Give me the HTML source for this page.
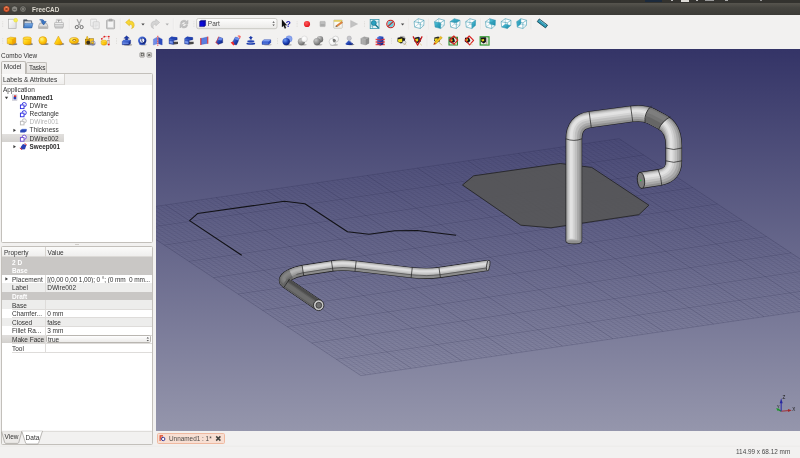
<!DOCTYPE html>
<html><head><meta charset="utf-8"><title>FreeCAD</title>
<style>
html,body{margin:0;padding:0;}
body{width:800px;height:458px;overflow:hidden;background:#f2f1f0;position:relative;font-family:"Liberation Sans",sans-serif;font-size:6.4px;color:#333333;}
.a{position:absolute;white-space:nowrap;line-height:8px;}
.b{font-weight:bold;}
svg{position:absolute;left:0;top:0;overflow:visible;}
#w{position:absolute;left:0;top:0;width:800px;height:458px;will-change:transform;}
</style></head><body><div id="w">

<div class="a" style="left:0;top:0;width:800px;height:3px;background:#33322e;"></div>
<div class="a" style="left:0;top:2.5px;width:800px;height:12px;background:linear-gradient(#57554e,#45443f 40%,#3c3b37);"></div>
<div class="a" style="left:645px;top:0;width:17px;height:1.6px;background:#1c2a3c;"></div>
<div class="a" style="left:681px;top:0;width:8px;height:2px;background:#dddbd6;"></div>
<div class="a" style="left:671px;top:0;width:2px;height:1.2px;background:#bbb;"></div>
<div class="a" style="left:696px;top:0;width:2px;height:1.2px;background:#bbb;"></div>
<div class="a" style="left:705px;top:0;width:9px;height:1px;background:#999;"></div>
<div class="a" style="left:725px;top:0;width:3px;height:1.4px;background:#aaa;"></div>
<div class="a" style="left:760px;top:0;width:2px;height:1px;background:#999;"></div>
<svg width="800" height="16">
 <defs><radialGradient id="cb" cx="0.5" cy="0.35" r="0.7"><stop offset="0" stop-color="#f58a5a"/><stop offset="1" stop-color="#d9481f"/></radialGradient></defs>
 <circle cx="6.5" cy="9" r="3.3" fill="url(#cb)" stroke="#3a2a22" stroke-width="0.6"/>
 <path d="M5.3 7.8L7.7 10.2M7.7 7.8L5.3 10.2" stroke="#5a1e0c" stroke-width="0.8"/>
 <circle cx="14.6" cy="9" r="3.1" fill="#8a8983" stroke="#33322e" stroke-width="0.6"/>
 <path d="M13.2 9.3H16" stroke="#45443f" stroke-width="0.8"/>
 <circle cx="23" cy="9" r="3.1" fill="#8a8983" stroke="#33322e" stroke-width="0.6"/>
 <rect x="21.7" y="7.8" width="2.6" height="2.4" fill="none" stroke="#45443f" stroke-width="0.7"/>
</svg>
<div class="a b" style="left:31.6px;top:5.6px;font-size:7.5px;color:#dfdbd2;transform-origin:0 0;transform:scaleX(0.85);">FreeCAD</div>
<div class="a" style="left:0;top:14.5px;width:800px;height:35px;background:#f2f1f0;"></div><svg width="800" height="50"><defs>
<linearGradient id="gy" x1="0" y1="0" x2="1" y2="1"><stop offset="0" stop-color="#fff05a"/><stop offset="0.55" stop-color="#ffc808"/><stop offset="1" stop-color="#ea9a00"/></linearGradient>
<radialGradient id="gys" cx="0.38" cy="0.32" r="0.75"><stop offset="0" stop-color="#fff68a"/><stop offset="0.5" stop-color="#ffcc10"/><stop offset="1" stop-color="#ea9a00"/></radialGradient>
<linearGradient id="gb" x1="0" y1="0" x2="1" y2="1"><stop offset="0" stop-color="#5f86e8"/><stop offset="0.6" stop-color="#1c3aa8"/><stop offset="1" stop-color="#0c1e70"/></linearGradient>
<radialGradient id="gbs" cx="0.35" cy="0.3" r="0.8"><stop offset="0" stop-color="#6f9cf5"/><stop offset="0.55" stop-color="#1c3fb4"/><stop offset="1" stop-color="#0a1a66"/></radialGradient>
<radialGradient id="ggs" cx="0.35" cy="0.3" r="0.8"><stop offset="0" stop-color="#c9c9c9"/><stop offset="0.6" stop-color="#8c8c8c"/><stop offset="1" stop-color="#5c5c5c"/></radialGradient>
<radialGradient id="gws" cx="0.4" cy="0.35" r="0.8"><stop offset="0" stop-color="#ffffff"/><stop offset="0.7" stop-color="#f1f1f1"/><stop offset="1" stop-color="#bcbcbc"/></radialGradient>
<linearGradient id="gt" x1="0" y1="0" x2="1" y2="1"><stop offset="0" stop-color="#58c4dc"/><stop offset="1" stop-color="#1489a8"/></linearGradient>
<radialGradient id="gr" cx="0.4" cy="0.35" r="0.7"><stop offset="0" stop-color="#ff5a5a"/><stop offset="1" stop-color="#e01018"/></radialGradient>
<linearGradient id="gpg" x1="0" y1="0" x2="1" y2="1"><stop offset="0" stop-color="#ffffff"/><stop offset="1" stop-color="#dcdcdc"/></linearGradient>
<linearGradient id="gf" x1="0" y1="0" x2="0" y2="1"><stop offset="0" stop-color="#7eaee6"/><stop offset="1" stop-color="#3d78c4"/></linearGradient>
</defs><rect x="2.2" y="21.4" width="1" height="0.8" fill="#dddbd8"/><rect x="2.2" y="23" width="1" height="0.8" fill="#dddbd8"/><rect x="2.2" y="24.6" width="1" height="0.8" fill="#dddbd8"/><rect x="2.2" y="26.2" width="1" height="0.8" fill="#dddbd8"/><rect x="2.2" y="38.2" width="1" height="0.8" fill="#dddbd8"/><rect x="2.2" y="39.8" width="1" height="0.8" fill="#dddbd8"/><rect x="2.2" y="41.4" width="1" height="0.8" fill="#dddbd8"/><rect x="2.2" y="43" width="1" height="0.8" fill="#dddbd8"/><g transform="translate(12.5 24)"><rect x="-4.2" y="-4.8" width="7.8" height="9.4" fill="url(#gpg)" stroke="#a9a9a9" stroke-width="0.6"/><circle cx="3.2" cy="-3.8" r="1.9" fill="#f6ee5a" stroke="#e6d820" stroke-width="0.4"/></g><g transform="translate(28 24)"><path d="M-4.4 -4.2L-1 -4.2L0 -3.2L3.6 -3.2L3.6 3.6L-4.4 3.6Z" fill="#54606e" stroke="#39434f" stroke-width="0.5"/><path d="M-3.4 -2.6H3.2V1H-3.4Z" fill="#e8e8e8"/><path d="M-3.2 -0.8L5 -0.8L3.8 3.9L-4.4 3.9Z" fill="url(#gf)" stroke="#3465a4" stroke-width="0.5"/></g><g transform="translate(43.2 24)"><path d="M-3.4 -0.8L3.4 -0.8L4.6 2L4.6 4.4L-4.6 4.4L-4.6 2Z" fill="#dedede" stroke="#8e8e8e" stroke-width="0.6"/><path d="M-4.2 2.4H4.2V4H-4.2Z" fill="#b4b4b4"/><path d="M-3.6 -4.2Q0.2 -5.4 1.4 -2.6L3 -2.6L0.4 1L-2.2 -2.6L-0.8 -2.6Q-1.4 -3.8 -3.6 -4.2Z" fill="#3a76c4" stroke="#1f4f94" stroke-width="0.5"/></g><g transform="translate(59 24)"><path d="M-2.6 -4.6H2.6V-1H-2.6Z" fill="#f8f8f8" stroke="#a4a4a4" stroke-width="0.5"/><path d="M-1.6 -3.6H1.6M-0.4 -3.6V-1.8" stroke="#7a7a7a" stroke-width="0.6"/><path d="M-4.4 -1Q-4.4 -1.6 -3.8 -1.6L3.8 -1.6Q4.4 -1.6 4.4 -1L4.4 3L-4.4 3Z" fill="#ececec" stroke="#9a9a9a" stroke-width="0.5"/><path d="M-4.4 0.8H4.4" stroke="#9a9a9a" stroke-width="0.7"/><path d="M-3.8 3H3.8V4.2H-3.8Z" fill="#d2d2d2" stroke="#9a9a9a" stroke-width="0.4"/></g><g transform="translate(79.2 24)"><path d="M-2.2 -4.8L1 1.6M2.2 -4.8L-1 1.6" stroke="#a8a8a8" stroke-width="1.2"/><circle cx="-2.4" cy="3.1" r="1.6" fill="none" stroke="#6e6e6e" stroke-width="1"/><circle cx="2.4" cy="3.1" r="1.6" fill="none" stroke="#6e6e6e" stroke-width="1"/></g><g transform="translate(95 24)"><rect x="-4.4" y="-4.8" width="6" height="7" rx="0.6" fill="#f0f0f0" stroke="#c4c4c4" stroke-width="0.6"/><rect x="-1.8" y="-2.2" width="6" height="7" rx="0.6" fill="#ededed" stroke="#bdbdbd" stroke-width="0.6"/><path d="M-0.4 0H2.8M-0.4 1.4H2.8M-0.4 2.8H1.6" stroke="#cfcfcf" stroke-width="0.5"/></g><g transform="translate(110.6 24)"><rect x="-4" y="-4" width="8" height="8.8" rx="0.7" fill="#dadada" stroke="#8e8e8e" stroke-width="0.6"/><rect x="-2.9" y="-2.8" width="5.8" height="6.6" fill="#f4f4f4" stroke="#bcbcbc" stroke-width="0.4"/><rect x="-1.6" y="-5" width="3.2" height="1.9" rx="0.5" fill="#b4b4b4" stroke="#8a8a8a" stroke-width="0.4"/></g><g transform="translate(130.2 24)"><path d="M-4.6 -1.6L-0.8 -4.8L-0.8 -3Q4 -3 4 1.4Q4 3.8 1.4 4.6Q2.6 3.2 1.8 1.6Q1 0 -0.8 0L-0.8 1.8Z" fill="#f7d736" stroke="#d8a800" stroke-width="0.5" stroke-linejoin="round"/></g><g transform="translate(155 24)"><g transform="scale(-1 1)"><path d="M-4.6 -1.6L-0.8 -4.8L-0.8 -3Q4 -3 4 1.4Q4 3.8 1.4 4.6Q2.6 3.2 1.8 1.6Q1 0 -0.8 0L-0.8 1.8Z" fill="#d4d4d4" stroke="#b4b4b4" stroke-width="0.5" stroke-linejoin="round"/></g></g><g transform="translate(184 24)"><path d="M-3.6 -0.6Q-3.2 -3.8 0 -3.8Q1.8 -3.8 2.8 -2.6L4 -3.8L4 -0.2L0.4 -0.2L1.6 -1.4Q0.9 -2.1 0 -2.1Q-1.8 -2.1 -2 -0.6Z" fill="#c2c2c2" stroke="#a6a6a6" stroke-width="0.4"/><path d="M3.6 0.8Q3.2 4 0 4Q-1.8 4 -2.8 2.8L-4 4L-4 0.4L-0.4 0.4L-1.6 1.6Q-0.9 2.3 0 2.3Q1.8 2.3 2 0.8Z" fill="#c2c2c2" stroke="#a6a6a6" stroke-width="0.4"/></g><g transform="translate(286 24)"><path d="M-4 -4.2L-4 3L-2.4 1.6L-1.2 4.4L0 3.9L-1.2 1.2L0.8 1.2Z" fill="#111" stroke="#000" stroke-width="0.3"/><text x="-0.2" y="3.2" font-size="8.4" font-weight="bold" fill="#2424a8" font-family="Liberation Sans, sans-serif">?</text></g><g transform="translate(307 24)"><circle cx="0" cy="0" r="3.1" fill="url(#gr)"/></g><g transform="translate(322.6 24)"><rect x="-2.6" y="-2.6" width="5.2" height="5.2" rx="0.5" fill="#bdbdbd" stroke="#a4a4a4" stroke-width="0.5"/><rect x="-2.1" y="0" width="4.2" height="2.1" fill="#aaaaaa"/></g><g transform="translate(338 24)"><rect x="-4.2" y="-4" width="8.4" height="8.2" rx="0.6" fill="#fbfbf6" stroke="#b0ae9e" stroke-width="0.6"/><rect x="-4.2" y="-4" width="8.4" height="1.8" fill="#e2cf6a"/><path d="M-3 1.4H2M-3 2.8H2.6" stroke="#d6d4c8" stroke-width="0.5"/><path d="M-1.8 1.6L3.6 -2.4L4.6 -1.2L-0.8 2.6Z" fill="#e8873a" stroke="#b05a20" stroke-width="0.4"/><path d="M-1.8 1.6L-0.8 2.6L-2.6 3Z" fill="#4a3a2a"/></g><g transform="translate(353.6 24)"><path d="M-3 -3.6L4 0L-3 3.6Z" fill="#c2c2c2" stroke="#b0b0b0" stroke-width="0.4"/></g><g transform="translate(374.6 24)"><rect x="-4.4" y="-4.6" width="8.8" height="9.2" fill="#e6f3f6" stroke="#3a98ae" stroke-width="0.8"/><path d="M-4.4 2L-2 2L-2 4.6M4.4 -2L2.6 -2" stroke="#3a98ae" stroke-width="0.6" fill="none"/><circle cx="-0.8" cy="-1" r="2.5" fill="#2aa0c0" stroke="#147890" stroke-width="0.7"/><path d="M1 1L3.6 3.6" stroke="#147890" stroke-width="1.4" stroke-linecap="round"/></g><g transform="translate(390.6 24)"><circle cx="0" cy="0" r="3" fill="#6accdc"/><circle cx="0" cy="0" r="3.8" fill="none" stroke="#c02020" stroke-width="1.1"/><path d="M-2.8 2.6L2.8 -2.6" stroke="#c02020" stroke-width="1.1"/></g><g transform="translate(419.2 24)"><path d="M-5.1 -2.3 L-0.9 -5.3 L4.8 -3.7 L4.6 1.4 L1.1 4.5 L-4.5 3.1 Z" fill="#ffffff" opacity="0.85"/><g fill="none" stroke="#2f93ac" stroke-width="0.55" stroke-linejoin="round"><path d="M-5.1 -2.3 L-0.9 -5.3 L4.8 -3.7 L4.6 1.4 L1.1 4.5 L-4.5 3.1 Z" fill="none" /><path d="M-5.1 -2.3L1.1 -1.2L4.8 -3.7M1.1 -1.2L1.1 4.5"/><path d="M-4.5 3.1L-0.9 0.1L4.6 1.4M-0.9 0.1L-0.9 -5.3" opacity="0.6"/></g></g><g transform="translate(439.6 24)"><path d="M-5.1 -2.3 L-0.9 -5.3 L4.8 -3.7 L4.6 1.4 L1.1 4.5 L-4.5 3.1 Z" fill="#ffffff" opacity="0.85"/><path d="M-5.1 -2.3 L1.1 -1.2 L1.1 4.5 L-4.5 3.1 Z" fill="url(#gt)" /><g fill="none" stroke="#2f93ac" stroke-width="0.55" stroke-linejoin="round"><path d="M-5.1 -2.3 L-0.9 -5.3 L4.8 -3.7 L4.6 1.4 L1.1 4.5 L-4.5 3.1 Z" fill="none" /><path d="M-5.1 -2.3L1.1 -1.2L4.8 -3.7M1.1 -1.2L1.1 4.5"/><path d="M-4.5 3.1L-0.9 0.1L4.6 1.4M-0.9 0.1L-0.9 -5.3" opacity="0.6"/></g></g><g transform="translate(455.2 24)"><path d="M-5.1 -2.3 L-0.9 -5.3 L4.8 -3.7 L4.6 1.4 L1.1 4.5 L-4.5 3.1 Z" fill="#ffffff" opacity="0.85"/><path d="M-5.1 -2.3 L-0.9 -5.3 L4.8 -3.7 L1.1 -1.2 Z" fill="url(#gt)" /><g fill="none" stroke="#2f93ac" stroke-width="0.55" stroke-linejoin="round"><path d="M-5.1 -2.3 L-0.9 -5.3 L4.8 -3.7 L4.6 1.4 L1.1 4.5 L-4.5 3.1 Z" fill="none" /><path d="M-5.1 -2.3L1.1 -1.2L4.8 -3.7M1.1 -1.2L1.1 4.5"/><path d="M-4.5 3.1L-0.9 0.1L4.6 1.4M-0.9 0.1L-0.9 -5.3" opacity="0.6"/></g></g><g transform="translate(470.8 24)"><path d="M-5.1 -2.3 L-0.9 -5.3 L4.8 -3.7 L4.6 1.4 L1.1 4.5 L-4.5 3.1 Z" fill="#ffffff" opacity="0.85"/><path d="M1.1 -1.2 L4.8 -3.7 L4.6 1.4 L1.1 4.5 Z" fill="url(#gt)" /><g fill="none" stroke="#2f93ac" stroke-width="0.55" stroke-linejoin="round"><path d="M-5.1 -2.3 L-0.9 -5.3 L4.8 -3.7 L4.6 1.4 L1.1 4.5 L-4.5 3.1 Z" fill="none" /><path d="M-5.1 -2.3L1.1 -1.2L4.8 -3.7M1.1 -1.2L1.1 4.5"/><path d="M-4.5 3.1L-0.9 0.1L4.6 1.4M-0.9 0.1L-0.9 -5.3" opacity="0.6"/></g></g><g transform="translate(490.6 24)"><path d="M-5.1 -2.3 L-0.9 -5.3 L4.8 -3.7 L4.6 1.4 L1.1 4.5 L-4.5 3.1 Z" fill="#ffffff" opacity="0.85"/><path d="M-0.9 -5.3 L4.8 -3.7 L4.6 1.4 L-0.9 0.1 Z" fill="url(#gt)" /><g fill="none" stroke="#2f93ac" stroke-width="0.55" stroke-linejoin="round"><path d="M-5.1 -2.3 L-0.9 -5.3 L4.8 -3.7 L4.6 1.4 L1.1 4.5 L-4.5 3.1 Z" fill="none" /><path d="M-5.1 -2.3L1.1 -1.2L4.8 -3.7M1.1 -1.2L1.1 4.5"/><path d="M-4.5 3.1L-0.9 0.1L4.6 1.4M-0.9 0.1L-0.9 -5.3" opacity="0.6"/></g></g><g transform="translate(506.2 24)"><path d="M-5.1 -2.3 L-0.9 -5.3 L4.8 -3.7 L4.6 1.4 L1.1 4.5 L-4.5 3.1 Z" fill="#ffffff" opacity="0.85"/><path d="M-4.5 3.1 L1.1 4.5 L4.6 1.4 L-0.9 0.1 Z" fill="url(#gt)" /><g fill="none" stroke="#2f93ac" stroke-width="0.55" stroke-linejoin="round"><path d="M-5.1 -2.3 L-0.9 -5.3 L4.8 -3.7 L4.6 1.4 L1.1 4.5 L-4.5 3.1 Z" fill="none" /><path d="M-5.1 -2.3L1.1 -1.2L4.8 -3.7M1.1 -1.2L1.1 4.5"/><path d="M-4.5 3.1L-0.9 0.1L4.6 1.4M-0.9 0.1L-0.9 -5.3" opacity="0.6"/></g></g><g transform="translate(521.8 24)"><path d="M-5.1 -2.3 L-0.9 -5.3 L4.8 -3.7 L4.6 1.4 L1.1 4.5 L-4.5 3.1 Z" fill="#ffffff" opacity="0.85"/><path d="M-0.9 -5.3 L-5.1 -2.3 L-4.5 3.1 L-0.9 0.1 Z" fill="url(#gt)" /><g fill="none" stroke="#2f93ac" stroke-width="0.55" stroke-linejoin="round"><path d="M-5.1 -2.3 L-0.9 -5.3 L4.8 -3.7 L4.6 1.4 L1.1 4.5 L-4.5 3.1 Z" fill="none" /><path d="M-5.1 -2.3L1.1 -1.2L4.8 -3.7M1.1 -1.2L1.1 4.5"/><path d="M-4.5 3.1L-0.9 0.1L4.6 1.4M-0.9 0.1L-0.9 -5.3" opacity="0.6"/></g></g><g transform="translate(542.4 24)"><g transform="translate(0 -0.6) rotate(37)"><rect x="-5.2" y="-1.7" width="10.4" height="3.4" fill="#2c9ab6" stroke="#123c48" stroke-width="0.7"/><path d="M-3.4 -1.6V0M-1.8 -1.6V-0.3M-0.2 -1.6V0M1.4 -1.6V-0.3M3 -1.6V0" stroke="#bfe8f2" stroke-width="0.5"/></g></g><path d="M69.4 18.5V29.5" stroke="#e1dfdc" stroke-width="0.6"/><path d="M70 18.5V29.5" stroke="#f9f9f8" stroke-width="0.5"/><path d="M120.4 18.5V29.5" stroke="#e1dfdc" stroke-width="0.6"/><path d="M121 18.5V29.5" stroke="#f9f9f8" stroke-width="0.5"/><path d="M173.4 18.5V29.5" stroke="#e1dfdc" stroke-width="0.6"/><path d="M174 18.5V29.5" stroke="#f9f9f8" stroke-width="0.5"/><path d="M409 18.5V29.5" stroke="#e1dfdc" stroke-width="0.6"/><path d="M409.6 18.5V29.5" stroke="#f9f9f8" stroke-width="0.5"/><path d="M429 18.5V29.5" stroke="#e1dfdc" stroke-width="0.6"/><path d="M429.6 18.5V29.5" stroke="#f9f9f8" stroke-width="0.5"/><path d="M480.6 18.5V29.5" stroke="#e1dfdc" stroke-width="0.6"/><path d="M481.2 18.5V29.5" stroke="#f9f9f8" stroke-width="0.5"/><path d="M531.2 18.5V29.5" stroke="#e1dfdc" stroke-width="0.6"/><path d="M531.8 18.5V29.5" stroke="#f9f9f8" stroke-width="0.5"/><rect x="193.4" y="21.4" width="1" height="0.8" fill="#dddbd8"/><rect x="193.4" y="23" width="1" height="0.8" fill="#dddbd8"/><rect x="193.4" y="24.6" width="1" height="0.8" fill="#dddbd8"/><rect x="193.4" y="26.2" width="1" height="0.8" fill="#dddbd8"/><rect x="296.6" y="21.4" width="1" height="0.8" fill="#dddbd8"/><rect x="296.6" y="23" width="1" height="0.8" fill="#dddbd8"/><rect x="296.6" y="24.6" width="1" height="0.8" fill="#dddbd8"/><rect x="296.6" y="26.2" width="1" height="0.8" fill="#dddbd8"/><rect x="364" y="21.4" width="1" height="0.8" fill="#dddbd8"/><rect x="364" y="23" width="1" height="0.8" fill="#dddbd8"/><rect x="364" y="24.6" width="1" height="0.8" fill="#dddbd8"/><rect x="364" y="26.2" width="1" height="0.8" fill="#dddbd8"/><path d="M141.3 23.4L144.7 23.4L143 25.4Z" fill="#4a4a4a"/><path d="M165.5 23.4L168.9 23.4L167.2 25.4Z" fill="#b0b0b0"/><path d="M400.9 23.4L404.3 23.4L402.6 25.4Z" fill="#4a4a4a"/><g transform="translate(11.6 40.8)"><ellipse cx="1.4" cy="3.3" rx="4.4" ry="1.2" fill="#2a2a2a" opacity="0.55"/><path d="M-4.4 -2.4L-1 -3.8L4.2 -3L4.2 2L1 3.8L-4.4 2.8Z" fill="url(#gy)" stroke="#c88400" stroke-width="0.4"/><path d="M-4.4 -2.4L1 -1.4L4.2 -3M1 -1.4L1 3.8" stroke="#e09a00" stroke-width="0.4" fill="none"/><path d="M1 -1.4L4.2 -3L4.2 2L1 3.8Z" fill="#e89400" opacity="0.55"/></g><g transform="translate(27.2 40.8)"><ellipse cx="1.6" cy="3.3" rx="4.2" ry="1.2" fill="#2a2a2a" opacity="0.55"/><path d="M-4 -2.6L-4 2.4Q-4 3.9 0 3.9Q4 3.9 4 2.4L4 -2.6Z" fill="url(#gy)" stroke="#c88400" stroke-width="0.4"/><ellipse cx="0" cy="-2.6" rx="4" ry="1.4" fill="#ffd83a" stroke="#d89a00" stroke-width="0.4"/></g><g transform="translate(42.8 40.8)"><ellipse cx="1.8" cy="3.2" rx="4" ry="1.1" fill="#2a2a2a" opacity="0.55"/><circle cx="0" cy="-0.2" r="4" fill="url(#gys)" stroke="#c88400" stroke-width="0.4"/></g><g transform="translate(58.4 40.8)"><ellipse cx="1.8" cy="3.3" rx="4" ry="1.1" fill="#2a2a2a" opacity="0.55"/><path d="M0 -4.8L-4 2.8Q-4 4 0 4Q4 4 4 2.8Z" fill="url(#gy)" stroke="#c88400" stroke-width="0.4"/></g><g transform="translate(74 40.8)"><ellipse cx="1.4" cy="3" rx="4.4" ry="1.1" fill="#2a2a2a" opacity="0.55"/><ellipse cx="0" cy="-0.2" rx="4.6" ry="3.2" fill="url(#gys)" stroke="#c88400" stroke-width="0.4"/><ellipse cx="0.2" cy="-0.6" rx="1.8" ry="1" fill="#b87400" stroke="#8a5600" stroke-width="0.3"/><ellipse cx="0.3" cy="-0.3" rx="1.2" ry="0.55" fill="#f4e6b0"/></g><g transform="translate(89.8 40.8)"><ellipse cx="1" cy="3.4" rx="4.4" ry="1.1" fill="#2a2a2a" opacity="0.55"/><path d="M-2.6 -4.8L-0.8 -1L-4.4 -1Z" fill="#f8c820" stroke="#a87800" stroke-width="0.3"/><rect x="-4.6" y="-1.2" width="4.2" height="4.6" fill="#e8a800" stroke="#7a5600" stroke-width="0.4"/><rect x="-0.6" y="-2.2" width="4.4" height="5" fill="#f8c41c" stroke="#7a5600" stroke-width="0.4"/><circle cx="-1.6" cy="1.6" r="1.9" fill="#3a3020"/><circle cx="3.2" cy="2.4" r="2.2" fill="none" stroke="#7a82c0" stroke-width="0.7"/></g><g transform="translate(105.2 40.8)"><path d="M-4 0.4L-4 3Q-4 4.4 -1.2 4.4Q1.6 4.4 1.6 3L1.6 0.4Z" fill="url(#gy)" stroke="#c88400" stroke-width="0.4"/><ellipse cx="-1.2" cy="0.4" rx="2.8" ry="1.1" fill="#ffd83a" stroke="#d89a00" stroke-width="0.3"/><rect x="2" y="-0.6" width="2.4" height="4.4" fill="#f4f4f4" stroke="#8a8a8a" stroke-width="0.4"/><path d="M-3.4 -2.2L-1 -4.2L3.6 -4.2L3.6 3.6" fill="none" stroke="#e02020" stroke-width="0.6" stroke-dasharray="1 0.8"/><circle cx="-3.4" cy="-2" r="0.9" fill="#e02020"/><circle cx="-0.8" cy="-4.2" r="0.9" fill="#e02020"/><circle cx="3.6" cy="-4.2" r="0.9" fill="#e02020"/><circle cx="3.6" cy="3.8" r="0.9" fill="#e02020"/></g><g transform="translate(126.6 40.8)"><ellipse cx="1.4" cy="4" rx="4.2" ry="0.9" fill="#2a2a2a" opacity="0.45"/><path d="M0 -5L2.8 -2.6L1.2 -2.6L1.2 -0.6L-1.2 -0.6L-1.2 -2.6L-2.8 -2.6Z" fill="#1c3aa8" stroke="#0c1e70" stroke-width="0.3"/><path d="M-4.4 0.6L-2.8 -0.8L4 -0.8L4 2.6L2.4 4L-4.4 4Z" fill="url(#gb)" stroke="#0c1e70" stroke-width="0.3"/><path d="M-4.4 0.6L-2.8 -0.8L4 -0.8L2.4 0.6Z" fill="#4a6ed4"/><path d="M-4 1.6H2V3.2H-4Z" fill="#7a9af0" opacity="0.75"/></g><g transform="translate(142.2 40.8)"><ellipse cx="1.2" cy="4" rx="3.4" ry="0.8" fill="#2a2a2a" opacity="0.3"/><circle cx="0" cy="-0.2" r="3.2" fill="#f4f6fc" stroke="url(#gb)" stroke-width="2"/><path d="M-0.4 -3V0.6L1.6 2" stroke="#1c2a6a" stroke-width="0.8" fill="none"/><path d="M-3.6 2.2Q0 5.4 3.6 2.2L2.4 4.2L-2.4 4.2Z" fill="#3a5ec8"/></g><g transform="translate(157.8 40.8)"><path d="M-4.4 -1.6L-0.6 -3.6L-0.6 3L-4.4 4.2Z" fill="#6f8ce8" stroke="#3a56c0" stroke-width="0.3"/><path d="M4.4 -1.6L0.6 -3.6L0.6 3L4.4 4.2Z" fill="#2c4cc0" stroke="#1c3aa8" stroke-width="0.3"/><path d="M0 -5V5" stroke="#f02a2a" stroke-width="0.9" stroke-dasharray="1.7 0.6"/></g><g transform="translate(173.2 40.8)"><path d="M-0.6 1L4.8 1L4.8 3.2L0.6 3.8Z" fill="#1c1c1c" opacity="0.8"/><path d="M-4.2 -2.2L-1.6 -4L4 -3.2L4 -1L0.4 -0.4L0.4 3.8L-4.2 3Z" fill="url(#gb)" stroke="#0c1e70" stroke-width="0.3"/><path d="M-4.2 -2.2L-1.6 -4L4 -3.2L1.2 -1.6Z" fill="#2444b4"/><path d="M-3.6 0.2L-0.4 0.6L-0.4 3L-3.6 2.4Z" fill="#8aa8f4" opacity="0.85"/></g><g transform="translate(188.8 40.8)"><path d="M-0.6 1L4.8 1L4.8 3.2L0.6 3.8Z" fill="#1c1c1c" opacity="0.8"/><path d="M-4.2 -2.2L-1.6 -4L4 -3.2L4 -1L0.4 -0.4L0.4 3.8L-4.2 3Z" fill="url(#gb)" stroke="#0c1e70" stroke-width="0.3"/><path d="M-4.2 -2.2L-1.6 -4L4 -3.2L1.2 -1.6Z" fill="#2444b4"/><path d="M-3.6 0.2L-0.4 0.6L-0.4 3L-3.6 2.4Z" fill="#8aa8f4" opacity="0.85"/></g><g transform="translate(204.4 40.8)"><path d="M-3.4 -2.4L3 -3.8L3 2.6L-3.4 3.8Z" fill="#5a7ee0" stroke="#1c3aa8" stroke-width="0.3"/><path d="M-3.6 -2.8V4.2M3.4 -4.2V3" stroke="#e62a2a" stroke-width="1"/></g><g transform="translate(219.8 40.8)"><path d="M-1 -3.8L2.8 -2.6L3 2L-1.6 3.6L-3.8 1.6Z" fill="url(#gb)" stroke="#0c1e70" stroke-width="0.3"/><path d="M-1 -3.8L2.8 -2.6L1.6 -0.2L-2 -1Z" fill="#6a8cec"/><path d="M-4 1.4L-1.6 3.8" stroke="#f02a2a" stroke-width="0.9"/><path d="M-1.2 -4.2L-2.4 -0.8L-4 1.4" stroke="#f02a2a" stroke-width="0.6" fill="none"/></g><g transform="translate(235.4 40.8)"><path d="M-3 1.4Q-1.4 -1.4 0 -3.8L3.8 -2.6Q3 1 1 4.2L-1.4 3.6Z" fill="url(#gb)" stroke="#0c1e70" stroke-width="0.3"/><path d="M0 -3.8L3.8 -2.6L3 -0.4L-1 -1.8Z" fill="#6a8cec"/><path d="M-4.8 1.8L-2.2 0.8L-0.8 4L-2 4.6Z" fill="#f02a2a"/><path d="M2.4 -4.8L4.8 -4.6L4.2 -2.2" stroke="#f02a2a" stroke-width="0.9" fill="none"/></g><g transform="translate(250.8 40.8)"><path d="M0 -4.8L2.2 -2.8L1 -2.8L1 -1.4L-1 -1.4L-1 -2.8L-2.2 -2.8Z" fill="#1c3aa8"/><ellipse cx="0" cy="0.4" rx="3.6" ry="1" fill="#2444b4"/><ellipse cx="0" cy="2.9" rx="4.4" ry="1.1" fill="#1c3aa8"/><ellipse cx="-0.4" cy="2.6" rx="2.6" ry="0.4" fill="#7a9af0" opacity="0.7"/></g><g transform="translate(266.4 40.8)"><ellipse cx="1.2" cy="3.9" rx="4.2" ry="0.8" fill="#2a2a2a" opacity="0.3"/><path d="M-4.4 0.8L-2.4 -1L4.4 -1L4.4 1.8L2.4 3.6L-4.4 3.6Z" fill="#2a4cc0" stroke="#14287c" stroke-width="0.3"/><path d="M-4.4 0.8L-2.4 -1L4.4 -1L2.4 0.8Z" fill="#7d9cf0"/><path d="M-3.8 1.6H1.8V3H-3.8Z" fill="#5a7ee0" opacity="0.9"/></g><g transform="translate(287.2 40.8)"><ellipse cx="0.6" cy="4.1" rx="4" ry="0.8" fill="#2a2a2a" opacity="0.3"/><circle cx="1.8" cy="-1.9" r="3.2" fill="#8aa6f0" stroke="#4a66c8" stroke-width="0.3"/><circle cx="-1" cy="0.8" r="3.7" fill="url(#gbs)"/></g><g transform="translate(302.6 40.8)"><ellipse cx="0.2" cy="4" rx="4" ry="0.8" fill="#2a2a2a" opacity="0.35"/><circle cx="-1.2" cy="0.8" r="3.6" fill="url(#ggs)"/><circle cx="1.8" cy="-1.8" r="3" fill="url(#gws)" stroke="#b4b4b4" stroke-width="0.3"/></g><g transform="translate(318.2 40.8)"><ellipse cx="0.2" cy="4" rx="4" ry="0.8" fill="#2a2a2a" opacity="0.35"/><circle cx="1.8" cy="-1.6" r="3.2" fill="url(#ggs)"/><circle cx="-1.2" cy="0.8" r="3.6" fill="url(#ggs)"/></g><g transform="translate(333.8 40.8)"><ellipse cx="0.2" cy="4.1" rx="4" ry="0.8" fill="#2a2a2a" opacity="0.3"/><circle cx="-1.2" cy="0.9" r="3.5" fill="url(#gws)" stroke="#a8a8a8" stroke-width="0.4"/><circle cx="1.8" cy="-1.7" r="3" fill="url(#gws)" stroke="#a8a8a8" stroke-width="0.4"/><path d="M-0.8 -1.8Q1 -2.8 2.2 -0.6Q1.8 1.6 0 1.8Q-1.6 0.2 -0.8 -1.8Z" fill="#7a7a7a"/></g><g transform="translate(349.2 40.8)"><ellipse cx="1.6" cy="3.7" rx="3.6" ry="0.8" fill="#2a2a2a" opacity="0.5"/><path d="M0 -1L-3.8 3Q-3.8 4.2 0 4.2Q3.8 4.2 3.8 3Z" fill="url(#gb)"/><circle cx="0" cy="-2.6" r="2.2" fill="#c6c6cc" stroke="#8a8a90" stroke-width="0.3"/><path d="M-0.4 -0.6L2.8 2.4" stroke="#e8e8e8" stroke-width="0.6"/></g><g transform="translate(364.8 40.8)"><path d="M-4 -2.4L-0.6 -4L4.2 -3L4.2 2.4L0.8 4.2L-4 3Z" fill="#a4a4a4" stroke="#8a8a8a" stroke-width="0.3"/><path d="M-4 -2.4L0.8 -1.2L4.2 -3M0.8 -1.2V4.2" stroke="#c8c8c8" stroke-width="0.4" fill="none"/><path d="M0.8 -1.2L4.2 -3L4.2 2.4L0.8 4.2Z" fill="#8c8c8c"/><path d="M-2.4 -2V3.4M-0.8 -1.6V3.8" stroke="#c0c0c0" stroke-width="0.4"/></g><g transform="translate(380.2 40.8)"><path d="M-4.6 -1.4H4.6M-4.6 1.2H4.6M-4.6 3.6H4.6" stroke="#f03030" stroke-width="1.5" opacity="0.9"/><path d="M-3 -3.6L-0.6 -4.8L3.2 -4L3.2 3.4L0.6 4.8L-3 4Z" fill="url(#gb)"/><path d="M-3 -1.4L0.6 -0.6L3.2 -1.6M-3 1.2L0.6 2L3.2 1M-3 3.4L0.6 4.2" stroke="#f03030" stroke-width="0.8" fill="none"/></g><g transform="translate(401.8 40.8)"><path d="M-4.2 -3L0.6 -4L3.4 -2.4L3 1.2L-1 2.6L-4.4 0.6Z" fill="#1a1a1a"/><path d="M-4.2 -1.4L0.4 -2.2L0.4 1.2L-3.2 1.6Z" fill="#f0e020"/><path d="M-1.8 -4.4L2.4 -4.4L3.6 -2.2L1.4 -3.2Z" fill="#c8c8c8" stroke="#6a6a6a" stroke-width="0.3"/><path d="M1 0.8L4.6 4.2M4.2 1.8L2.2 4.4" stroke="#d8c890" stroke-width="0.9"/><circle cx="2.4" cy="1.6" r="1.7" fill="#e8e8e8" stroke="#7a7a7a" stroke-width="0.4"/></g><g transform="translate(417.6 40.8)"><path d="M-3 -3L0.8 -4L3.6 -2.4L3 1L-0.8 2.4L-3.4 0.4Z" fill="#1a1a2a"/><path d="M-2.6 -1.8L0.6 -2.4L0.6 0.4L-2 0.8Z" fill="#e8d820"/><path d="M1.4 -3.2L3.4 -2.2L2.2 -0.6Z" fill="#3a58c8"/><path d="M-4.6 -4.4L0 4.4L4.6 -4.4" fill="none" stroke="#c81818" stroke-width="1.2" stroke-linejoin="round"/><path d="M2 2.6L4.4 4.6" stroke="#d8c890" stroke-width="0.8"/></g><g transform="translate(437.8 40.8)"><path d="M-3.4 -3.4L0.6 -4.2L2.4 -2.6L2 0.6L-1.4 1.6L-3.8 0Z" fill="#2a2a2a"/><path d="M-3.4 -2L-0.2 -2.6L-0.2 0.2L-2.6 0.6Z" fill="#f0e020"/><path d="M1 -4.2L3.6 -3.4L3.4 -1.4L1.6 -2.4Z" fill="#b8b8b8"/><path d="M-4.2 3.8L-3.4 1.6L2.8 -4.6L4.6 -3L-1.8 3.2Z" fill="#f0c020" stroke="#a07800" stroke-width="0.3"/><path d="M-4.2 3.8L-3.4 1.6L-1.8 3.2Z" fill="#c02020"/><path d="M0.8 1.4L4.4 4.4" stroke="#c8b880" stroke-width="0.8"/></g><g transform="translate(453.2 40.8)"><path d="M-4.2 -3.6H4.2V4.2H-4.2Z" fill="#dfe8d8" stroke="#2c8a2c" stroke-width="1.1"/><path d="M-3.6 -2.6L0.6 -3L1.8 0.6L-1.2 2.6L-3.8 1Z" fill="#141414"/><path d="M-3.2 -1.2L-0.8 -1.6L-0.6 0.2L-2.6 0.6Z" fill="#e8d820"/><path d="M0.6 -4.8L4.6 -0.6L0.8 3.6L-3.4 -0.8Z" fill="none" stroke="#d82020" stroke-width="1.1" stroke-linejoin="round"/><path d="M1.6 1.8L3.8 4.2" stroke="#d8c890" stroke-width="0.8"/></g><g transform="translate(468.8 40.8)"><path d="M-3.8 -3L0.2 -3.4L1.6 0.2L-1.2 2.4L-4 0.6Z" fill="#141414"/><path d="M-3.4 -1.6L-1 -2L-0.8 -0.2L-2.8 0.2Z" fill="#e8d820"/><path d="M0.4 -4.8L4.8 -0.4L0.8 4L-3.6 -0.6Z" fill="none" stroke="#d82020" stroke-width="1.1" stroke-linejoin="round"/><path d="M1.8 2.2L3.8 4.4" stroke="#d8c890" stroke-width="0.8"/></g><g transform="translate(484.6 40.8)"><rect x="-4.4" y="-4" width="8.8" height="8.2" fill="#e8e8e0" stroke="#2c9a2c" stroke-width="1.2"/><path d="M-3.8 -3.2L1.2 -3.6L2.4 0.4L-1 2.6L-3.8 0.8Z" fill="#141414"/><path d="M-3.4 -1.4L-0.6 -1.8L-0.4 0.2L-2.6 0.6Z" fill="#e8d820"/><path d="M2 -3V3" stroke="#b0b0b0" stroke-width="1.4"/><path d="M1.2 1.6L3.6 4" stroke="#d8c890" stroke-width="0.8"/></g><path d="M427.2 35.3V46.3" stroke="#e1dfdc" stroke-width="0.6"/><path d="M427.8 35.3V46.3" stroke="#f9f9f8" stroke-width="0.5"/><rect x="116" y="38.2" width="1" height="0.8" fill="#dddbd8"/><rect x="116" y="39.8" width="1" height="0.8" fill="#dddbd8"/><rect x="116" y="41.4" width="1" height="0.8" fill="#dddbd8"/><rect x="116" y="43" width="1" height="0.8" fill="#dddbd8"/><rect x="277" y="38.2" width="1" height="0.8" fill="#dddbd8"/><rect x="277" y="39.8" width="1" height="0.8" fill="#dddbd8"/><rect x="277" y="41.4" width="1" height="0.8" fill="#dddbd8"/><rect x="277" y="43" width="1" height="0.8" fill="#dddbd8"/><rect x="391" y="38.2" width="1" height="0.8" fill="#dddbd8"/><rect x="391" y="39.8" width="1" height="0.8" fill="#dddbd8"/><rect x="391" y="41.4" width="1" height="0.8" fill="#dddbd8"/><rect x="391" y="43" width="1" height="0.8" fill="#dddbd8"/><defs><linearGradient id="gcb" x1="0" y1="0" x2="0" y2="1"><stop offset="0" stop-color="#fefefe"/><stop offset="1" stop-color="#eae9e7"/></linearGradient></defs><rect x="196.6" y="18.5" width="80.4" height="10.2" rx="1.8" fill="url(#gcb)" stroke="#b4b1ab" stroke-width="0.6"/><path d="M199.6 21.4L201 20.4L205.6 20.4L205.6 25.4L204.2 26.6L199.6 26.6Z" fill="#0a0ad8" stroke="#050560" stroke-width="0.5"/><path d="M199.6 21.4L204.2 21.4L205.6 20.4M204.2 21.4V26.6" stroke="#050560" stroke-width="0.4" fill="none"/><path d="M272.4 22.8L273.6 21.3L274.8 22.8ZM272.4 24.6L273.6 26.1L274.8 24.6Z" fill="#4a4a4a"/></svg><div class="a" style="left:207.8px;top:20px;font-size:6.5px;color:#484848;">Part</div><div class="a " style="left:1.1px;top:51.9px;font-size:6.4px;">Combo View</div>
<svg width="160" height="80">
<rect x="139.8" y="52.6" width="4.6" height="4.6" rx="0.8" fill="#d9d7d4" stroke="#8c8a86" stroke-width="0.6"/>
<rect x="141.2" y="53.6" width="2.2" height="2.2" fill="none" stroke="#4a4945" stroke-width="0.6"/>
<rect x="147" y="52.6" width="4.6" height="4.6" rx="0.8" fill="#d9d7d4" stroke="#8c8a86" stroke-width="0.6"/>
<path d="M148.2 53.8L150.4 56M150.4 53.8L148.2 56" stroke="#3a3935" stroke-width="0.8"/>
</svg>
<div class="a" style="left:25.5px;top:62px;width:21.5px;height:12px;border:0.6px solid #c2bfba;border-bottom:none;border-radius:2px 2px 0 0;background:linear-gradient(#efedeb,#e3e1de);box-sizing:border-box;"></div>
<div class="a" style="left:0.6px;top:73.3px;width:152.2px;height:169.7px;border:0.9px solid #c3c0bb;border-radius:1.5px;background:#f2f1f0;box-sizing:border-box;"></div>
<div class="a" style="left:1px;top:60.5px;width:24.5px;height:13.5px;border:0.6px solid #bdbab5;border-bottom:none;border-radius:2px 2px 0 0;background:#f4f3f2;box-sizing:border-box;"></div>
<div class="a " style="left:3.8px;top:63.2px;font-size:6.5px;">Model</div>
<div class="a " style="left:29px;top:63.8px;font-size:6.5px;">Tasks</div>
<div class="a" style="left:1.6px;top:74.2px;width:150.2px;height:10.6px;background:#f1f0ef;"></div>
<div class="a" style="left:1.6px;top:74.2px;width:62.2px;height:10.6px;background:linear-gradient(#fafaf9,#f0efee);border-bottom:0.5px solid #dcdad7;box-sizing:border-box;"></div>
<div class="a" style="left:63.6px;top:74.2px;width:0.7px;height:10.6px;background:#d6d3cf;"></div>
<div class="a " style="left:3px;top:75.6px;font-size:6.5px;">Labels &amp; Attributes</div>
<div class="a" style="left:1.6px;top:84.8px;width:150.2px;height:157.2px;background:#fff;"></div>
<div class="a" style="left:1.6px;top:134.3px;width:62.6px;height:8px;background:linear-gradient(#e2e0de,#d4d2cf);"></div>
<div class="a " style="left:3px;top:85.6px;font-size:6.5px;">Application</div>
<div class="a b" style="left:20.8px;top:93.75px;font-size:6.3px;color:#2e2e2e;">Unnamed1</div>
<div class="a " style="left:29.6px;top:101.9px;font-size:6.5px;">DWire</div>
<div class="a " style="left:29.6px;top:110.05px;font-size:6.5px;">Rectangle</div>
<div class="a " style="left:29.6px;top:118.2px;font-size:6.5px;color:#b4b4b4;">DWire001</div>
<div class="a " style="left:29.6px;top:126.35px;font-size:6.5px;">Thickness</div>
<div class="a " style="left:29.6px;top:134.5px;font-size:6.5px;">DWire002</div>
<div class="a b" style="left:29.6px;top:142.65px;font-size:6.3px;color:#2a2a2a;">Sweep001</div>
<svg width="160" height="250"><path d="M4.9 96.65L8.1 96.65L6.5 99.25Z" fill="#3a3a3a"/><path d="M13.4 128.65L13.4 132.05L16 130.35Z" fill="#3a3a3a"/><path d="M13.4 144.95L13.4 148.35L16 146.65Z" fill="#3a3a3a"/><rect x="12.4" y="94.85" width="4.6" height="5.6" fill="#e9e9f2" stroke="#b8b8c4" stroke-width="0.5"/><rect x="13.6" y="96.55" width="2.6" height="2.8" fill="#2b3fb0"/><rect x="14" y="95.35" width="2.2" height="1.6" fill="#d42a2a"/><g fill="#fff" stroke="#2b2be0" stroke-width="0.9"><circle cx="24.2" cy="104.6" r="2.1"/><rect x="20.4" y="105" width="3.6" height="3.6"/></g><g fill="#fff" stroke="#2b2be0" stroke-width="0.9"><circle cx="24.2" cy="112.75" r="2.1"/><rect x="20.4" y="113.15" width="3.6" height="3.6"/></g><g fill="#fff" stroke="#b9b9b9" stroke-width="0.9"><circle cx="24.2" cy="120.9" r="2.1"/><rect x="20.4" y="121.3" width="3.6" height="3.6"/></g><g fill="#fff" stroke="#6a48d0" stroke-width="0.9"><circle cx="24.2" cy="137.2" r="2.1"/><rect x="20.4" y="137.6" width="3.6" height="3.6"/></g><path d="M20.2 130.35L22 128.95L26.6 128.95L26.6 131.35L24.6 132.55L20.2 132.55Z" fill="#2a48b8"/><path d="M20.4 130.45L22 129.15L26.4 129.15" stroke="#8aa4e8" stroke-width="0.6" fill="none"/><path d="M20.6 147.25L23 144.05L26.4 145.05L25 149.25L21.4 149.45Z" fill="#2a3fb4"/><path d="M19.8 148.05L22 149.55M24.6 143.45L26.8 145.05" stroke="#e03030" stroke-width="1"/></svg>
<div class="a" style="left:75px;top:243.8px;width:4px;height:0.8px;background:#d0cdc9;"></div>
<div class="a" style="left:0.6px;top:246.2px;width:152.2px;height:199.2px;border:0.9px solid #c3c0bb;border-radius:1.5px;background:#f2f1f0;box-sizing:border-box;"></div>
<div class="a" style="left:1.6px;top:247px;width:150.2px;height:184.2px;background:#fff;"></div>
<div class="a" style="left:1.6px;top:247px;width:150.2px;height:10.4px;background:linear-gradient(#fbfbfa,#efeeed);border-bottom:0.5px solid #dcdad7;box-sizing:border-box;"></div>
<div class="a" style="left:44.8px;top:247px;width:0.7px;height:10.4px;background:#d6d3cf;"></div>
<div class="a " style="left:4px;top:248.8px;font-size:6.5px;">Property</div>
<div class="a " style="left:47.6px;top:248.8px;font-size:6.5px;">Value</div>
<div class="a" style="left:1.6px;top:257.4px;width:150.2px;height:8.7px;background:#c9c7c5;"></div>
<div class="a b" style="left:12px;top:258.6px;font-size:6.5px;color:#fff;">2 D</div>
<div class="a" style="left:1.6px;top:266px;width:150.2px;height:8.7px;background:#c9c7c5;"></div>
<div class="a b" style="left:12px;top:267.2px;font-size:6.5px;color:#fff;">Base</div>
<div class="a" style="left:12px;top:282.9px;width:139.8px;height:0.5px;background:#dedcda;"></div>
<div class="a" style="left:44.8px;top:274.6px;width:0.6px;height:8.6px;background:#dedcda;"></div>
<div class="a " style="left:12px;top:275.8px;font-size:6.5px;">Placement</div>
<div class="a " style="left:47.2px;top:275.8px;font-size:6.5px;letter-spacing:-0.1px;">[(0,00 0,00 1,00); 0 °; (0 mm&nbsp; 0 mm...</div>
<div class="a" style="left:1.6px;top:283.2px;width:150.2px;height:8.6px;background:#ededec;"></div>
<div class="a" style="left:12px;top:291.5px;width:139.8px;height:0.5px;background:#dedcda;"></div>
<div class="a" style="left:44.8px;top:283.2px;width:0.6px;height:8.6px;background:#dedcda;"></div>
<div class="a " style="left:12px;top:284.4px;font-size:6.5px;">Label</div>
<div class="a " style="left:47.2px;top:284.4px;font-size:6.5px;">DWire002</div>
<div class="a" style="left:1.6px;top:291.8px;width:150.2px;height:8.7px;background:#c9c7c5;"></div>
<div class="a b" style="left:12px;top:293px;font-size:6.5px;color:#fff;">Draft</div>
<div class="a" style="left:1.6px;top:300.4px;width:150.2px;height:8.6px;background:#ededec;"></div>
<div class="a" style="left:12px;top:308.7px;width:139.8px;height:0.5px;background:#dedcda;"></div>
<div class="a" style="left:44.8px;top:300.4px;width:0.6px;height:8.6px;background:#dedcda;"></div>
<div class="a " style="left:12px;top:301.6px;font-size:6.5px;">Base</div>
<div class="a" style="left:12px;top:317.3px;width:139.8px;height:0.5px;background:#dedcda;"></div>
<div class="a" style="left:44.8px;top:309px;width:0.6px;height:8.6px;background:#dedcda;"></div>
<div class="a " style="left:12px;top:310.2px;font-size:6.5px;">Chamfer...</div>
<div class="a " style="left:47.2px;top:310.2px;font-size:6.5px;">0 mm</div>
<div class="a" style="left:1.6px;top:317.6px;width:150.2px;height:8.6px;background:#ededec;"></div>
<div class="a" style="left:12px;top:325.9px;width:139.8px;height:0.5px;background:#dedcda;"></div>
<div class="a" style="left:44.8px;top:317.6px;width:0.6px;height:8.6px;background:#dedcda;"></div>
<div class="a " style="left:12px;top:318.8px;font-size:6.5px;">Closed</div>
<div class="a " style="left:47.2px;top:318.8px;font-size:6.5px;">false</div>
<div class="a" style="left:12px;top:334.5px;width:139.8px;height:0.5px;background:#dedcda;"></div>
<div class="a" style="left:44.8px;top:326.2px;width:0.6px;height:8.6px;background:#dedcda;"></div>
<div class="a " style="left:12px;top:327.4px;font-size:6.5px;">Fillet Ra...</div>
<div class="a " style="left:47.2px;top:327.4px;font-size:6.5px;">3 mm</div>
<div class="a" style="left:1.6px;top:334.8px;width:43.4px;height:8.6px;background:linear-gradient(#e0dedc,#d3d1ce);"></div>
<div class="a" style="left:45.6px;top:335px;width:105.6px;height:8.2px;border:0.6px solid #b9b6b1;border-radius:1.6px;background:linear-gradient(#fefefe,#ecebe9);box-sizing:border-box;"></div>
<svg width="160" height="400"><path d="M146.6 338.5L147.8 337.1L149 338.5ZM146.6 339.9L147.8 341.3L149 339.9Z" fill="#4a4a4a"/></svg>
<div class="a" style="left:12px;top:343.1px;width:139.8px;height:0.5px;background:#dedcda;"></div>
<div class="a" style="left:44.8px;top:334.8px;width:0.6px;height:8.6px;background:#dedcda;"></div>
<div class="a " style="left:12px;top:336px;font-size:6.5px;">Make Face</div>
<div class="a " style="left:48px;top:335.6px;font-size:6.5px;">true</div>
<div class="a" style="left:12px;top:351.7px;width:139.8px;height:0.5px;background:#dedcda;"></div>
<div class="a" style="left:44.8px;top:343.4px;width:0.6px;height:8.6px;background:#dedcda;"></div>
<div class="a " style="left:12px;top:344.6px;font-size:6.5px;">Tool</div>
<svg width="160" height="400"><path d="M5.4 277.2L5.4 280.6L8 278.9Z" fill="#3a3a3a"/></svg>
<svg width="160" height="458">
<path d="M1.6 431.3H151.8" stroke="#c9c6c1" stroke-width="0.6"/>
<path d="M1.6 431.6L4.6 442.4Q5 443.4 6 443.4L17.4 443.4Q18.4 443.4 18.8 442.4L21.8 431.6" fill="#eceae8" stroke="#8f8c87" stroke-width="0.6"/>
<path d="M21.8 431.2L25.6 443Q26 444 27 444L37.2 444Q38.2 444 38.6 443L42.4 431.2Z" fill="#ffffff" stroke="#8f8c87" stroke-width="0.6"/>
<path d="M22.2 431.2L42 431.2" stroke="#fff" stroke-width="0.9"/>
</svg>
<div class="a " style="left:4.6px;top:433.4px;font-size:6.5px;">View</div>
<div class="a " style="left:25.6px;top:434px;font-size:6.5px;">Data</div>
<div class="a" style="left:155.8px;top:49.4px;width:644.2px;height:381.6px;background:linear-gradient(#343467,#9596ac);overflow:hidden;">
<svg width="644.2" height="381.6" viewBox="155.8 49.4 644.2 381.6">
<path d="M120.04 212.06L365.74 375.26M125.08 211.33L370.78 374.53M130.12 210.59L375.82 373.79M135.16 209.85L380.86 373.05M140.19 209.12L385.89 372.31M145.23 208.38L390.93 371.58M150.27 207.64L395.97 370.84M155.31 206.9L401.01 370.1M160.35 206.17L406.05 369.37M170.43 204.69L416.13 367.89M175.47 203.96L421.17 367.16M180.51 203.22L426.21 366.42M185.55 202.48L431.25 365.68M190.58 201.75L436.28 364.94M195.62 201.01L441.32 364.21M200.66 200.27L446.36 363.47M205.7 199.53L451.4 362.73M210.74 198.8L456.44 362M220.82 197.32L466.52 360.52M225.86 196.59L471.56 359.79M230.9 195.85L476.6 359.05M235.94 195.11L481.64 358.31M240.97 194.38L486.67 357.57M246.01 193.64L491.71 356.84M251.05 192.9L496.75 356.1M256.09 192.16L501.79 355.36M261.13 191.43L506.83 354.63M271.21 189.95L516.91 353.15M276.25 189.22L521.95 352.42M281.29 188.48L526.99 351.68M286.33 187.74L532.03 350.94M291.37 187L537.07 350.2M296.4 186.27L542.1 349.47M301.44 185.53L547.14 348.73M306.48 184.79L552.18 347.99M311.52 184.06L557.22 347.26M321.6 182.58L567.3 345.78M326.64 181.85L572.34 345.05M331.68 181.11L577.38 344.31M336.72 180.37L582.42 343.57M341.75 179.63L587.45 342.83M346.79 178.9L592.49 342.1M351.83 178.16L597.53 341.36M356.87 177.42L602.57 340.62M361.91 176.69L607.61 339.89M371.99 175.21L617.69 338.41M377.03 174.48L622.73 337.68M382.07 173.74L627.77 336.94M387.11 173L632.81 336.2M392.14 172.26L637.85 335.46M397.18 171.53L642.88 334.73M402.22 170.79L647.92 333.99M407.26 170.05L652.96 333.25M412.3 169.32L658 332.52M422.38 167.84L668.08 331.04M427.42 167.11L673.12 330.31M432.46 166.37L678.16 329.57M437.5 165.63L683.2 328.83M442.53 164.89L688.23 328.09M447.57 164.16L693.27 327.36M452.61 163.42L698.31 326.62M457.65 162.68L703.35 325.88M462.69 161.95L708.39 325.15M472.77 160.47L718.47 323.67M477.81 159.74L723.51 322.94M482.85 159L728.55 322.2M487.89 158.26L733.59 321.46M492.92 157.53L738.62 320.73M497.96 156.79L743.66 319.99M503 156.05L748.7 319.25M508.04 155.31L753.74 318.51M513.08 154.58L758.78 317.78M523.16 153.1L768.86 316.3M528.2 152.37L773.9 315.57M533.24 151.63L778.94 314.83M538.28 150.89L783.98 314.09M543.32 150.16L789.02 313.36M548.35 149.42L794.05 312.62M553.39 148.68L799.09 311.88M558.43 147.94L804.13 311.14M563.47 147.21L809.17 310.41M573.55 145.73L819.25 308.93M578.59 145L824.29 308.2M583.63 144.26L829.33 307.46M588.67 143.52L834.37 306.72M593.7 142.78L839.4 305.99M598.74 142.05L844.44 305.25M603.78 141.31L849.48 304.51M608.82 140.57L854.52 303.77M613.86 139.84L859.56 303.04" stroke="#20204a" stroke-opacity="0.23" stroke-width="0.5" fill="none"/>
<path d="M117.46 214.43L621.36 140.73M119.91 216.06L623.81 142.36M122.37 217.7L626.27 144M124.83 219.33L628.73 145.63M127.28 220.96L631.18 147.26M129.74 222.59L633.64 148.89M132.2 224.22L636.1 150.52M134.66 225.86L638.56 152.16M137.11 227.49L641.01 153.79M142.03 230.75L645.93 157.05M144.48 232.38L648.38 158.68M146.94 234.02L650.84 160.32M149.4 235.65L653.3 161.95M151.85 237.28L655.75 163.58M154.31 238.91L658.21 165.21M156.77 240.54L660.67 166.84M159.23 242.18L663.13 168.48M161.68 243.81L665.58 170.11M166.6 247.07L670.5 173.37M169.05 248.7L672.95 175M171.51 250.34L675.41 176.64M173.97 251.97L677.87 178.27M176.43 253.6L680.32 179.9M178.88 255.23L682.78 181.53M181.34 256.86L685.24 183.16M183.8 258.5L687.7 184.8M186.25 260.13L690.15 186.43M191.17 263.39L695.07 189.69M193.62 265.02L697.52 191.32M196.08 266.66L699.98 192.96M198.54 268.29L702.44 194.59M201 269.92L704.89 196.22M203.45 271.55L707.35 197.85M205.91 273.18L709.81 199.48M208.37 274.82L712.27 201.12M210.82 276.45L714.72 202.75M215.74 279.71L719.64 206.01M218.19 281.34L722.09 207.64M220.65 282.98L724.55 209.28M223.11 284.61L727.01 210.91M225.56 286.24L729.46 212.54M228.02 287.87L731.92 214.17M230.48 289.5L734.38 215.8M232.94 291.14L736.84 217.44M235.39 292.77L739.29 219.07M240.31 296.03L744.21 222.33M242.76 297.66L746.66 223.96M245.22 299.3L749.12 225.6M247.68 300.93L751.58 227.23M250.13 302.56L754.03 228.86M252.59 304.19L756.49 230.49M255.05 305.82L758.95 232.12M257.51 307.46L761.41 233.76M259.96 309.09L763.86 235.39M264.88 312.35L768.78 238.65M267.33 313.98L771.23 240.28M269.79 315.62L773.69 241.92M272.25 317.25L776.15 243.55M274.7 318.88L778.61 245.18M277.16 320.51L781.06 246.81M279.62 322.14L783.52 248.44M282.08 323.78L785.98 250.08M284.53 325.41L788.43 251.71M289.45 328.67L793.35 254.97M291.9 330.3L795.8 256.6M294.36 331.94L798.26 258.24M296.82 333.57L800.72 259.87M299.27 335.2L803.17 261.5M301.73 336.83L805.63 263.13M304.19 338.46L808.09 264.76M306.65 340.1L810.55 266.4M309.1 341.73L813 268.03M314.02 344.99L817.92 271.29M316.47 346.62L820.37 272.92M318.93 348.26L822.83 274.56M321.39 349.89L825.29 276.19M323.85 351.52L827.75 277.82M326.3 353.15L830.2 279.45M328.76 354.78L832.66 281.08M331.22 356.42L835.12 282.72M333.67 358.05L837.57 284.35M338.59 361.31L842.49 287.61M341.04 362.94L844.94 289.24M343.5 364.58L847.4 290.88M345.96 366.21L849.86 292.51M348.41 367.84L852.31 294.14M350.87 369.47L854.77 295.77M353.33 371.1L857.23 297.4M355.79 372.74L859.69 299.04M358.24 374.37L862.14 300.67" stroke="#20204a" stroke-opacity="0.13" stroke-width="0.5" fill="none"/>
<path d="M115 212.8L360.7 376M165.39 205.43L411.09 368.63M215.78 198.06L461.48 361.26M266.17 190.69L511.87 353.89M316.56 183.32L562.26 346.52M366.95 175.95L612.65 339.15M417.34 168.58L663.04 331.78M467.73 161.21L713.43 324.41M518.12 153.84L763.82 317.04M568.51 146.47L814.21 309.67M618.9 139.1L864.6 302.3" stroke="#1c1c40" stroke-opacity="0.3" stroke-width="0.7" fill="none"/>
<path d="M115 212.8L618.9 139.1M139.57 229.12L643.47 155.42M164.14 245.44L668.04 171.74M188.71 261.76L692.61 188.06M213.28 278.08L717.18 204.38M237.85 294.4L741.75 220.7M262.42 310.72L766.32 237.02M286.99 327.04L790.89 253.34M311.56 343.36L815.46 269.66M336.13 359.68L840.03 285.98M360.7 376L864.6 302.3" stroke="#1c1c40" stroke-opacity="0.27" stroke-width="0.7" fill="none"/>
<path d="M462.3 185.4L473.4 176.2L560 163.9L591.5 167.8L648.7 205.6L638.7 215.1L550.8 228.2L520.6 225.6Z" fill="#565656" fill-opacity="0.9" stroke="#1f1f1f" stroke-width="0.8"/>
<path d="M241.5 255.6L189.4 221L197.3 214L284.1 201.6L304.7 204.1L347.3 232.1L368.7 234.6L394.6 231.2L417 231L455.9 235.7" stroke="#121216" stroke-width="1.05" fill="none" stroke-linejoin="round"/>
<path d="M318.4 305.5L286.2 283.6C278.7 278.6 293.8 272.3 302.7 270.9L332 266.4Q341.7 264.9 355.4 266.5L411.5 273Q426.7 274.76 439.5 272.9L487.9 265.8" stroke="#1b1b1b" stroke-width="11.0" fill="none" stroke-linejoin="round"/>
<path d="M318.4 305.5L286.2 283.6C278.7 278.6 293.8 272.3 302.7 270.9L332 266.4Q341.7 264.9 355.4 266.5L411.5 273Q426.7 274.76 439.5 272.9L487.9 265.8" stroke="#8c8c8c" stroke-width="9.8" fill="none" stroke-linejoin="round"/>
<path d="M285 282.8C278.7 278.6 293.8 272.3 302.7 270.9L332 266.4Q341.7 264.9 355.4 266.5L411.5 273Q426.7 274.76 439.5 272.9L487.9 265.8" stroke="#b9b9b9" stroke-width="6.6" fill="none" transform="translate(0.1,-1.4)"/>
<path d="M285 282.8C278.7 278.6 293.8 272.3 302.7 270.9L332 266.4Q341.7 264.9 355.4 266.5L411.5 273Q426.7 274.76 439.5 272.9L487.9 265.8" stroke="#cfcfcf" stroke-width="4" fill="none" transform="translate(0.1,-1.7)"/>
<path d="M285 282.8C278.7 278.6 293.8 272.3 302.7 270.9L332 266.4Q341.7 264.9 355.4 266.5L411.5 273Q426.7 274.76 439.5 272.9L487.9 265.8" stroke="#dedede" stroke-width="1.8" fill="none" transform="translate(0.1,-2)"/>
<path d="M286.2 283.6C281.5 280.3 285.7 276.7 291 274.4" stroke="#4e4e4e" stroke-opacity="0.62" stroke-width="9.8" fill="none"/>
<path d="M291 274.4Q296.5 272 302.7 270.9" stroke="#6a6a6a" stroke-opacity="0.35" stroke-width="9.8" fill="none"/>
<path d="M317.2 304.7L286.2 283.6" stroke="#5c5c5c" stroke-width="9.8" fill="none"/>
<path d="M317.2 304.7L286.2 283.6" stroke="#6c6c6c" stroke-width="4.6" fill="none" transform="translate(-0.7,1)"/>
<path d="M317.2 304.7L286.2 283.6" stroke="#4c4c4c" stroke-width="2.6" fill="none" transform="translate(2,-2.9)"/>
<path d="M289.3 279.48L283.5 288.12" stroke="#1c1c1c" stroke-width="0.7" fill="none"/>
<path d="M303.49 276.04L301.91 265.76" stroke="#1c1c1c" stroke-width="0.7" fill="none"/>
<path d="M332.79 271.54L331.21 261.26" stroke="#1c1c1c" stroke-width="0.7" fill="none"/>
<path d="M354.8 271.67L356 261.33" stroke="#1c1c1c" stroke-width="0.7" fill="none"/>
<path d="M410.9 278.17L412.1 267.83" stroke="#1c1c1c" stroke-width="0.7" fill="none"/>
<path d="M440.25 278.04L438.75 267.76" stroke="#1c1c1c" stroke-width="0.7" fill="none"/>
<path d="M296 272.6L302.7 270.9L332 266.4Q341.7 264.9 355.4 266.5L411.5 273Q426.7 274.76 439.5 272.9L487.9 265.8" stroke="#2e2e2e" stroke-width="0.6" fill="none" transform="translate(0.3,2.2)" opacity="0.85"/>
<ellipse cx="488" cy="265.8" rx="1.6" ry="5.3" fill="#b4b4b4" stroke="#1b1b1b" stroke-width="0.7" transform="rotate(8 488 265.8)"/>
<ellipse cx="318.5" cy="305.6" rx="5.2" ry="5.4" fill="#c9c9c9" stroke="#1b1b1b" stroke-width="0.8"/>
<ellipse cx="318.6" cy="305.7" rx="2.9" ry="3" fill="#707070" stroke="#2a2a2a" stroke-width="0.7"/>
<ellipse cx="573.7" cy="241.8" rx="8.3" ry="2.8" fill="#1b1b1b"/>
<path d="M573.7 241.5L573.7 139.6Q573.7 122.1 590 119.9L631.5 114.3Q643.6 112.7 651 116.6L661.5 122.2Q673.6 128.6 673.6 146L673.6 149L673.6 161.8Q673.6 175.3 659.8 177.7L641.6 180.6" stroke="#1b1b1b" stroke-width="16.6" fill="none"/>
<ellipse cx="573.7" cy="241.6" rx="7.700000000000001" ry="2.4" fill="#909090"/>
<path d="M573.7 241.5L573.7 139.6Q573.7 122.1 590 119.9L631.5 114.3Q643.6 112.7 651 116.6L661.5 122.2Q673.6 128.6 673.6 146L673.6 149L673.6 161.8Q673.6 175.3 659.8 177.7L641.6 180.6" stroke="#909090" stroke-width="15.400000000000002" fill="none"/>
<path d="M573.7 241.5L573.7 139.6Q573.7 122.1 590 119.9L631.5 114.3Q643.6 112.7 651 116.6L661.5 122.2Q673.6 128.6 673.6 146L673.6 149L673.6 161.8Q673.6 175.3 659.8 177.7L641.6 180.6" stroke="#a9a9a9" stroke-width="12.6" fill="none" transform="translate(-0.7,-0.7)"/>
<path d="M573.7 241.5L573.7 139.6Q573.7 122.1 590 119.9L631.5 114.3Q643.6 112.7 651 116.6L661.5 122.2Q673.6 128.6 673.6 146L673.6 149L673.6 161.8Q673.6 175.3 659.8 177.7L641.6 180.6" stroke="#c0c0c0" stroke-width="9.4" fill="none" transform="translate(-1.5,-1.4)"/>
<path d="M573.7 241.5L573.7 139.6Q573.7 122.1 590 119.9L631.5 114.3Q643.6 112.7 651 116.6L661.5 122.2Q673.6 128.6 673.6 146L673.6 149L673.6 161.8Q673.6 175.3 659.8 177.7L641.6 180.6" stroke="#d3d3d3" stroke-width="6" fill="none" transform="translate(-2.2,-2.1)"/>
<path d="M573.7 241.5L573.7 139.6Q573.7 122.1 590 119.9L631.5 114.3Q643.6 112.7 651 116.6L661.5 122.2Q673.6 128.6 673.6 146L673.6 149L673.6 161.8Q673.6 175.3 659.8 177.7L641.6 180.6" stroke="#e2e2e2" stroke-width="2.8" fill="none" transform="translate(-2.6,-2.5)"/>
<clipPath id="dk"><path d="M652.6 104Q643.6 113 644.8 124L657.4 131.6Q661.6 121.4 673.6 114.6Z"/></clipPath>
<g clip-path="url(#dk)">
<path d="M573.7 241.5L573.7 139.6Q573.7 122.1 590 119.9L631.5 114.3Q643.6 112.7 651 116.6L661.5 122.2Q673.6 128.6 673.6 146L673.6 149L673.6 161.8Q673.6 175.3 659.8 177.7L641.6 180.6" stroke="#666666" stroke-width="15.400000000000002" fill="none"/>
<path d="M573.7 241.5L573.7 139.6Q573.7 122.1 590 119.9L631.5 114.3Q643.6 112.7 651 116.6L661.5 122.2Q673.6 128.6 673.6 146L673.6 149L673.6 161.8Q673.6 175.3 659.8 177.7L641.6 180.6" stroke="#747474" stroke-width="9" fill="none" transform="translate(1.6,-2.4)"/>
<path d="M573.7 241.5L573.7 139.6Q573.7 122.1 590 119.9L631.5 114.3Q643.6 112.7 651 116.6L661.5 122.2Q673.6 128.6 673.6 146L673.6 149L673.6 161.8Q673.6 175.3 659.8 177.7L641.6 180.6" stroke="#7e7e7e" stroke-width="4.4" fill="none" transform="translate(2.2,-3.4)"/>
</g>
<path d="M565.6 139.2Q573.7 142.4 581.8 139.2" stroke="#1c1c1c" stroke-width="0.7" fill="none"/>
<path d="M591.07 127.83L588.93 111.97" stroke="#1c1c1c" stroke-width="0.7" fill="none"/>
<path d="M632.57 122.23L630.43 106.37" stroke="#1c1c1c" stroke-width="0.7" fill="none"/>
<path d="M651.4 106.2Q643.6 113 644.8 123" stroke="#1c1c1c" stroke-width="0.7" fill="none"/>
<path d="M670.2 117.2Q661.6 121.6 658.6 129.6" stroke="#1c1c1c" stroke-width="0.7" fill="none"/>
<path d="M665.4 148.4Q673.6 151.4 681.8 148.4" stroke="#1c1c1c" stroke-width="0.7" fill="none"/>
<path d="M665.4 161.2Q673.6 164.2 681.8 161.2" stroke="#1c1c1c" stroke-width="0.7" fill="none"/>
<path d="M657.8 169.6Q661.2 177.5 661.6 185.8" stroke="#1c1c1c" stroke-width="0.7" fill="none"/>
<ellipse cx="640.8" cy="180.8" rx="3.6" ry="8.2" fill="#7d7d7d" stroke="#1b1b1b" stroke-width="0.8" transform="rotate(-7 640.8 180.8)"/>
<circle cx="640.5" cy="180.8" r="0.8" fill="#1fbf3a"/>

<g>
<path d="M781 411.6L777.2 409.6" stroke="#1c8a2a" stroke-width="1.4"/>
<path d="M775.8 408.6L779 409.2L777.6 411.4Z" fill="#1c9a2a"/>
<path d="M781 411.6L788.5 411" stroke="#a03038" stroke-width="1"/>
<path d="M791.5 410.7L787.7 409.5L788 412.3Z" fill="#a02828"/>
<path d="M781 411.6L781 402.5" stroke="#3838a8" stroke-width="1.2"/>
<path d="M781 398.6L779.5 403.6L782.5 403.6Z" fill="#2828a0"/>
<text x="782.4" y="399.2" font-size="4.6" fill="#1a1a1a" font-family="Liberation Sans, sans-serif">Z</text>
<text x="792" y="411.2" font-size="4.6" fill="#1a1a1a" font-family="Liberation Sans, sans-serif">X</text>
<text x="776.6" y="408.6" font-size="4.4" fill="#1a1a1a" font-family="Liberation Sans, sans-serif">Y</text>
</g>

</svg></div>

<div class="a" style="left:156.8px;top:433px;width:68.4px;height:11.4px;border:0.7px solid #efb9a0;border-radius:1.6px;background:#f8dfd3;box-sizing:border-box;"></div>
<svg width="800" height="458">
<path d="M159.6 435.2L159.6 441L160.6 441L160.6 438.6L162.4 438.6L162.4 437.6L160.6 437.6L160.6 436.4L163 436.4L163 435.2Z" fill="#d83a1c"/>
<circle cx="163.2" cy="439" r="1.7" fill="#fff" stroke="#3a3a98" stroke-width="1"/>
<path d="M216.2 436.4L220.4 440.6M220.4 436.4L216.2 440.6" stroke="#45443f" stroke-width="1.5"/>
<path d="M0 446.2H800" stroke="#e6e4e1" stroke-width="0.5"/>
</svg>
<div class="a" style="left:169px;top:435.1px;font-size:6.4px;color:#4c4a47;">Unnamed1 : 1*</div>
<div class="a" style="left:736px;top:448.4px;font-size:6.4px;color:#4a4a4a;">114.99 x 68.12 mm</div>
</div></body></html>
